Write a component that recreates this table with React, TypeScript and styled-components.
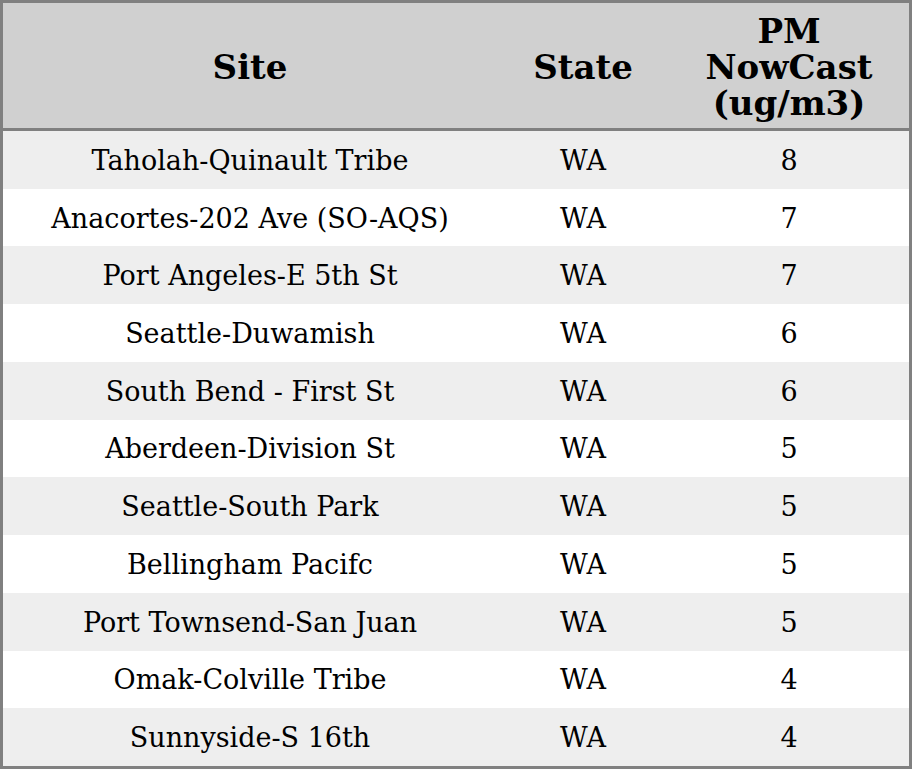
import React from 'react';
import styled, { createGlobalStyle } from 'styled-components';

const rows = [
  { site: 'Taholah-Quinault Tribe', state: 'WA', pm: 8 },
  { site: 'Anacortes-202 Ave (SO-AQS)', state: 'WA', pm: 7 },
  { site: 'Port Angeles-E 5th St', state: 'WA', pm: 7 },
  { site: 'Seattle-Duwamish', state: 'WA', pm: 6 },
  { site: 'South Bend - First St', state: 'WA', pm: 6 },
  { site: 'Aberdeen-Division St', state: 'WA', pm: 5 },
  { site: 'Seattle-South Park', state: 'WA', pm: 5 },
  { site: 'Bellingham Pacifc', state: 'WA', pm: 5 },
  { site: 'Port Townsend-San Juan', state: 'WA', pm: 5 },
  { site: 'Omak-Colville Tribe', state: 'WA', pm: 4 },
  { site: 'Sunnyside-S 16th', state: 'WA', pm: 4 },
];

const GlobalStyle = createGlobalStyle`
  html, body {
    margin: 0;
    padding: 0;
    background: #ffffff;
  }
  body {
    font-family: 'DejaVu Serif', serif;
  }
`;

const Table = styled.div`
  width: 912px;
  height: 769px;
  box-sizing: border-box;
  border: 3px solid #808080;
  display: grid;
  grid-template-columns: 494px 172px 1fr;
  grid-template-rows: 128px repeat(11, 1fr);
`;

const HeadCell = styled.div`
  background: #d0d0d0;
  border-bottom: 3px solid #808080;
  display: flex;
  align-items: center;
  justify-content: center;
  text-align: center;
  font-weight: bold;
  font-size: 34px;
  line-height: 36px;
  color: #000000;
  padding-top: 2px;
`;

const Cell = styled.div<{ $odd: boolean }>`
  background: ${(p) => (p.$odd ? '#eeeeee' : '#ffffff')};
  display: flex;
  align-items: center;
  justify-content: center;
  font-size: 27px;
  color: #000000;
  white-space: nowrap;
  padding-top: 1px;
`;

const App = () => {
  return (
    <>
      <GlobalStyle />
      <Table>
        <HeadCell>Site</HeadCell>
        <HeadCell>State</HeadCell>
        <HeadCell>
          PM
          <br />
          NowCast
          <br />
          (ug/m3)
        </HeadCell>
        {rows.map((r, i) => (
          <React.Fragment key={r.site}>
            <Cell $odd={i % 2 === 0}>{r.site}</Cell>
            <Cell $odd={i % 2 === 0}>{r.state}</Cell>
            <Cell $odd={i % 2 === 0}>{r.pm}</Cell>
          </React.Fragment>
        ))}
      </Table>
    </>
  );
};

export default App;
